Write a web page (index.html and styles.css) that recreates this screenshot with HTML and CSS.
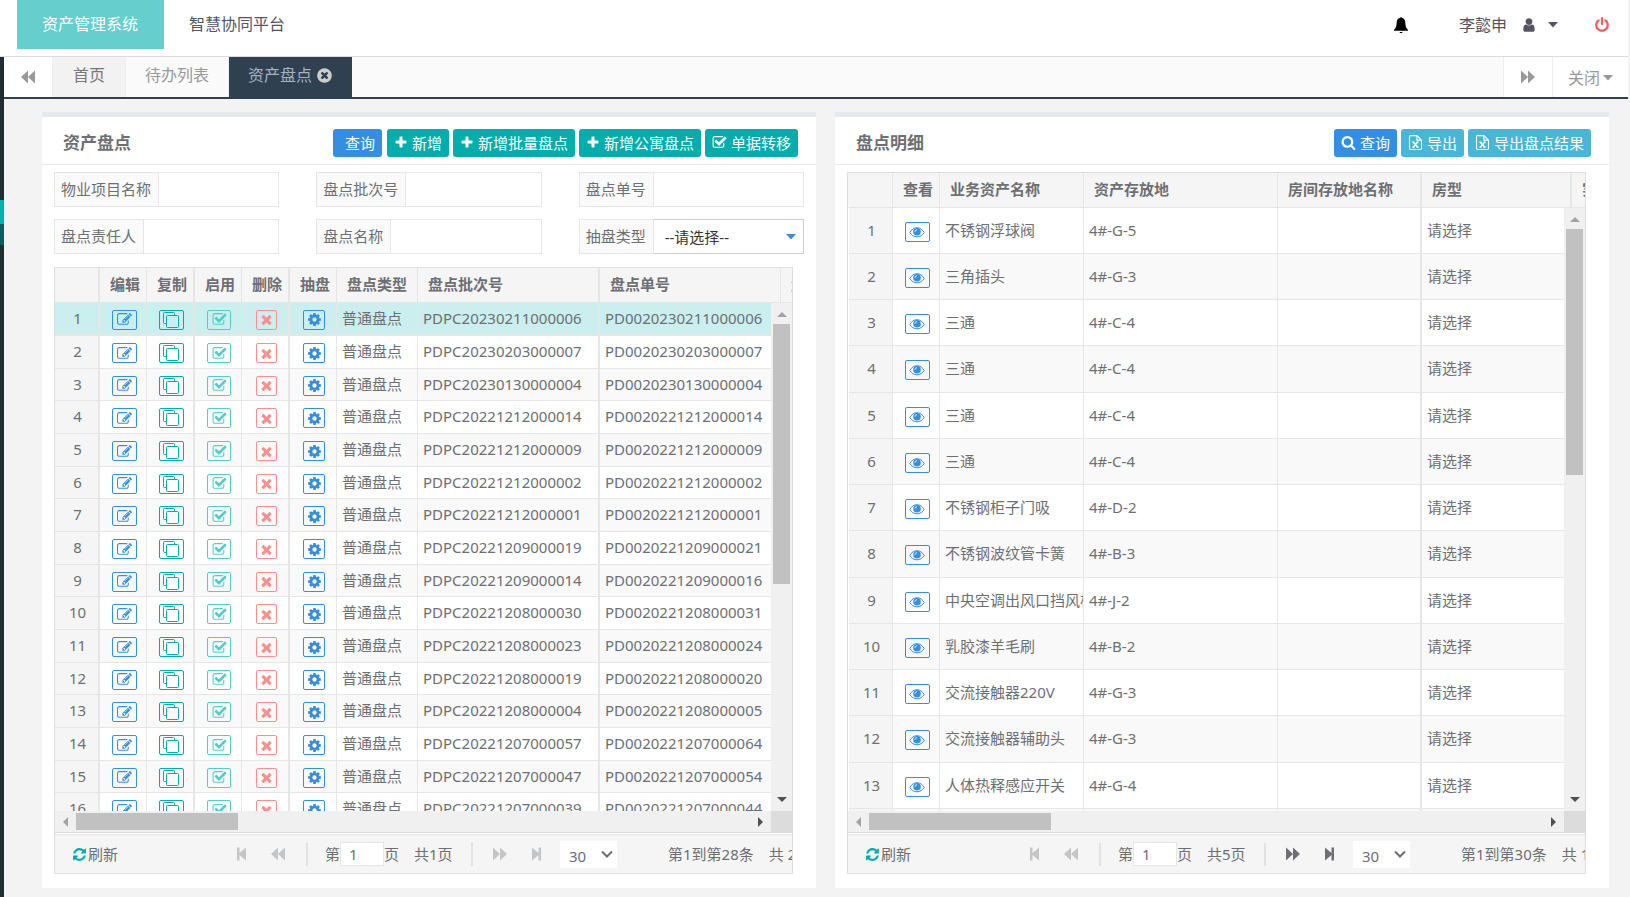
FILE: index.html
```html
<!DOCTYPE html>
<html lang="zh-CN">
<head>
<meta charset="utf-8">
<title>资产管理系统</title>
<link rel="stylesheet" href="styles.css">
</head>
<body>
<svg class="sprite" aria-hidden="true">
  <symbol id="i-edit" viewBox="0 0 1792 1792"><path d="M888 1184l116-116-152-152-116 116v56h96v96h56zm440-720q-16-16-33 1l-350 350q-17 17-1 33t33-1l350-350q17-17 1-33zm80 594v190q0 119-84.500 203.500t-203.500 84.500h-832q-119 0-203.500-84.500t-84.500-203.500v-832q0-119 84.500-203.500t203.500-84.500h832q63 0 117 25 15 7 18 23 3 17-9 29l-49 49q-14 14-32 8-23-6-45-6h-832q-66 0-113 47t-47 113v832q0 66 47 113t113 47h832q66 0 113-47t47-113v-126q0-13 9-22l64-64q15-15 35-7t20 29zm-96-738l288 288-672 672h-288v-288zm444 132l-92 92-288-288 92-92q28-28 68-28t68 28l152 152q28 28 28 68t-28 68z"/></symbol>
  <symbol id="i-clone" viewBox="0 0 16 16"><path fill="none" stroke="currentColor" stroke-width="1" d="M3.500 11.500h-2a1 1 0 0 1-1-1v-9a1 1 0 0 1 1-1h9a1 1 0 0 1 1 1v2M4.500 3.500h10a1 1 0 0 1 1 1v10a1 1 0 0 1-1 1h-10a1 1 0 0 1-1-1v-10a1 1 0 0 1 1-1z"/></symbol>
  <symbol id="i-check" viewBox="0 0 1792 1792"><path d="M1472 930v318q0 119-84.500 203.500t-203.500 84.500h-832q-119 0-203.500-84.500t-84.500-203.500v-832q0-119 84.500-203.500t203.500-84.500h832q63 0 117 25 15 7 18 23 3 17-9 29l-49 49q-10 10-23 10-3 0-9-2-23-6-45-6h-832q-66 0-113 47t-47 113v832q0 66 47 113t113 47h832q66 0 113-47t47-113v-254q0-13 9-22l64-64q10-10 23-10 6 0 12 3 20 8 20 29zm231-489l-814 814q-24 24-57 24t-57-24l-430-430q-24-24-24-57t24-57l110-110q24-24 57-24t57 24l263 263 647-647q24-24 57-24t57 24l110 110q24 24 24 57t-24 57z"/></symbol>
  <symbol id="i-times" viewBox="0 0 1792 1792"><path d="M1490 1322q0 40-28 68l-136 136q-28 28-68 28t-68-28l-294-294-294 294q-28 28-68 28t-68-28l-136-136q-28-28-28-68t28-68l294-294-294-294q-28-28-28-68t28-68l136-136q28-28 68-28t68 28l294 294 294-294q28-28 68-28t68 28l136 136q28 28 28 68t-28 68l-294 294 294 294q28 28 28 68z"/></symbol>
  <symbol id="i-cog" viewBox="0 0 1792 1792"><path d="M1152 896q0-106-75-181t-181-75-181 75-75 181 75 181 181 75 181-75 75-181zm512-109v222q0 12-8 23t-20 13l-185 28q-19 54-39 91 35 50 107 138 10 12 10 25t-9 23q-27 37-99 108t-94 71q-12 0-26-9l-138-108q-44 23-91 38-16 136-29 186-7 28-36 28h-222q-14 0-24.500-8.500t-11.500-21.500l-28-184q-49-16-90-37l-141 107q-10 9-25 9-14 0-25-11-126-114-165-168-7-10-7-23 0-12 8-23 15-21 51-66.500t54-70.500q-27-50-41-99l-183-27q-13-2-21-12.500t-8-23.500v-222q0-12 8-23t19-13l186-28q14-46 39-92-40-57-107-138-10-12-10-24 0-10 9-23 26-36 98.500-107.500t94.500-71.500q13 0 26 10l138 107q44-23 91-38 16-136 29-186 7-28 36-28h222q14 0 24.500 8.500t11.500 21.500l28 184q49 16 90 37l142-107q9-9 24-9 13 0 25 10 129 119 165 170 7 8 7 22 0 12-8 23-15 21-51 66.500t-54 70.500q26 50 41 98l183 28q13 2 21 12.500t8 23.500z"/></symbol>
  <symbol id="i-plus" viewBox="0 0 1792 1792"><path d="M1600 736v192q0 40-28 68t-68 28h-416v416q0 40-28 68t-68 28h-192q-40 0-68-28t-28-68v-416h-416q-40 0-68-28t-28-68v-192q0-40 28-68t68-28h416v-416q0-40 28-68t68-28h192q40 0 68 28t28 68v416h416q40 0 68 28t28 68z"/></symbol>
  <symbol id="i-search" viewBox="0 0 1792 1792"><path d="M1216 832q0-185-131.500-316.500t-316.500-131.500-316.500 131.500-131.500 316.500 131.500 316.500 316.500 131.500 316.500-131.500 131.500-316.500zm512 832q0 52-38 90t-90 38q-54 0-90-38l-343-342q-179 124-399 124-143 0-273.500-55.500t-225-150-150-225-55.500-273.500 55.500-273.500 150-225 225-150 273.500-55.500 273.500 55.500 225 150 150 225 55.500 273.500q0 220-124 399l343 343q37 37 37 90z"/></symbol>
  <symbol id="i-refresh" viewBox="0 0 1792 1792"><path d="M1639 1056q0 5-1 7-64 268-268 434.500t-478 166.500q-146 0-282.500-55t-243.500-157l-129 129q-19 19-45 19t-45-19-19-45v-448q0-26 19-45t45-19h448q26 0 45 19t19 45-19 45l-137 137q71 66 161 102t187 36q134 0 250-65t186-179q11-17 53-117 8-23 30-23h192q13 0 22.500 9.500t9.500 22.500zm25-800v448q0 26-19 45t-45 19h-448q-26 0-45-19t-19-45 19-45l138-138q-148-137-349-137-134 0-250 65t-186 179q-11 17-53 117-8 23-30 23h-199q-13 0-22.500-9.500t-9.500-22.500v-7q65-268 270-434.500t480-166.500q146 0 284 55.500t245 156.500l130-129q19-19 45-19t45 19 19 45z"/></symbol>
  <symbol id="i-power" viewBox="0 0 1792 1792"><path d="M1664 896q0 156-61 298t-164 245-245 164-298 61-298-61-245-164-164-245-61-298q0-182 80.500-343t226.500-270q43-32 95.500-25t83.500 50q32 42 24.500 94.500t-49.500 84.500q-98 74-151.500 181t-53.500 228q0 104 40.500 198.500t109.500 163.500 163.500 109.500 198.500 40.500 198.500-40.500 163.500-109.500 109.500-163.500 40.500-198.500q0-121-53.500-228t-151.500-181q-42-32-49.500-84.500t24.500-94.500q31-43 84-50t95 25q146 109 226.500 270t80.500 343zm-640-768v640q0 52-38 90t-90 38-90-38-38-90v-640q0-52 38-90t90-38 90 38 38 90z"/></symbol>
  <symbol id="i-user" viewBox="0 0 1792 1792"><path d="M1536 1399q0 109-62.500 187t-150.500 78h-854q-88 0-150.500-78t-62.500-187q0-85 8.500-160.500t31.500-152 58.500-131 94-89 134.500-34.500q131 128 313 128t313-128q76 0 134.500 34.500t94 89 58.500 131 31.500 152 8.500 160.500zm-256-887q0 159-112.500 271.500t-271.500 112.500-271.500-112.500-112.500-271.500 112.500-271.500 271.500-112.500 271.500 112.500 112.500 271.500z"/></symbol>
  <symbol id="i-close" viewBox="0 0 1792 1792"><path d="M1277 1122q0-26-19-45l-181-181 181-181q19-19 19-45 0-27-19-46l-90-90q-19-19-46-19-26 0-45 19l-181 181-181-181q-19-19-45-19-27 0-46 19l-90 90q-19 19-19 46 0 26 19 45l181 181-181 181q-19 19-19 45 0 27 19 46l90 90q19 19 46 19 26 0 45-19l181-181 181 181q19 19 45 19 27 0 46-19l90-90q19-19 19-46zm387-226q0 209-103 385.500t-279.500 279.500-385.500 103-385.500-103-279.500-279.500-103-385.500 103-385.500 279.500-279.500 385.500-103 385.500 103 279.500 279.500 103 385.500z"/></symbol>
  <symbol id="i-bell" viewBox="0 0 16 16"><path d="M7.500 0h1v.8C11 1.200 12.200 3 12.300 5.500c.1 3.500.7 5 2.700 7.500v.8H1V13c2-2.500 2.600-4 2.700-7.500C3.800 3 5 1.200 7.500.8zM6.500 15h3l-.5 1H7z"/></symbol>
  <symbol id="i-back" viewBox="0 0 16 16"><path d="M8 1.500v13L1 8zM15 1.500v13L8 8z"/></symbol>
  <symbol id="i-fwd" viewBox="0 0 16 16"><path d="M1 1.500v13L8 8zM8 1.500v13L15 8z"/></symbol>
  <symbol id="i-first" viewBox="0 0 16 16"><path d="M3 1.500h2.500V7L12 1.500v13L5.500 9v5.500H3z"/></symbol>
  <symbol id="i-last" viewBox="0 0 16 16"><path d="M13 1.500h-2.500V7L4 1.500v13L10.500 9v5.500H13z"/></symbol>
  <symbol id="i-caret" viewBox="0 0 10 6"><path d="M0 0h10L5 5.500z"/></symbol>
  <symbol id="i-chevron" viewBox="0 0 12 8"><path d="M1 1.500l5 5 5-5" fill="none" stroke="currentColor" stroke-width="2"/></symbol>
  <symbol id="i-eye" viewBox="0 0 16 16"><path fill="none" stroke="currentColor" d="M.8 8.500C2.500 5.500 5 3.700 8 3.700s5.500 1.800 7.200 4.800C13.500 11.300 11 12.800 8 12.800S2.500 11.300.8 8.500z"/><circle cx="8" cy="7.800" r="3.800"/><path fill="none" stroke="#fff" stroke-width=".8" d="M5.900 7.800A2.100 2.100 0 0 1 8 5.700"/></symbol>
  <symbol id="i-excel" viewBox="0 0 14 16"><path fill="none" stroke="currentColor" stroke-width="1.200" d="M8.500.6h-7a.9.900 0 0 0-.9.900v13a.9.900 0 0 0 .9.900h11a.9.900 0 0 0 .9-.9v-9zV5.500h5"/><path fill="none" stroke="currentColor" stroke-width="1.500" d="M4.500 7.500l5 5.500M9.500 7.500l-5 5.500"/><path fill="none" stroke="currentColor" d="M3.500 7.500h2.500M8 7.500h2.500M3.500 13h2.500M8 13h2.500"/></symbol>
</svg>

<header class="topbar">
  <nav class="topnav">
    <a class="topnav-link is-active" href="#">资产管理系统</a>
    <a class="topnav-link" href="#">智慧协同平台</a>
  </nav>
  <div class="topbar-tools">
    <button class="tool bell" aria-label="通知"><svg class="icon"><use href="#i-bell"/></svg></button>
    <button class="tool user">李懿申<svg class="icon"><use href="#i-user"/></svg><svg class="caret"><use href="#i-caret"/></svg></button>
    <button class="tool power" aria-label="退出"><svg class="icon"><use href="#i-power"/></svg></button>
  </div>
</header>

<div class="shell">
  <aside class="side"><span class="side-on"></span><span class="side-sub"></span></aside>
  <main class="main">
    <nav class="tabs">
      <button class="tab-btn" aria-label="向左"><svg class="icon"><use href="#i-back"/></svg></button>
      <a class="tab is-home" href="#">首页</a>
      <a class="tab" href="#">待办列表</a>
      <a class="tab is-active" href="#">资产盘点<svg class="icon"><use href="#i-close"/></svg></a>
      <span class="tab-space"></span>
      <button class="tab-btn is-right" aria-label="向右"><svg class="icon"><use href="#i-fwd"/></svg></button>
      <button class="tab-btn tab-close">关闭<svg class="caret"><use href="#i-caret"/></svg></button>
    </nav>

    <div class="panels">
      <section class="panel">
        <header class="panel-head">
          <h2 class="panel-title">资产盘点</h2>
          <div class="actions">
            <button class="btn blue no-icon">查询</button>
            <button class="btn"><svg class="icon plus"><use href="#i-plus"/></svg>新增</button>
            <button class="btn"><svg class="icon plus"><use href="#i-plus"/></svg>新增批量盘点</button>
            <button class="btn"><svg class="icon plus"><use href="#i-plus"/></svg>新增公寓盘点</button>
            <button class="btn"><svg class="icon"><use href="#i-check"/></svg>单据转移</button>
          </div>
        </header>
        <div class="panel-body">
          <form class="filters">
            <div class="field"><label for="f1">物业项目名称</label><input id="f1" type="text"></div>
            <div class="field"><label for="f2">盘点批次号</label><input id="f2" type="text"></div>
            <div class="field"><label for="f3">盘点单号</label><input id="f3" type="text"></div>
            <div class="field"><label for="f4">盘点责任人</label><input id="f4" type="text"></div>
            <div class="field"><label for="f5">盘点名称</label><input id="f5" type="text"></div>
            <div class="field"><label for="f6">抽盘类型</label><span class="select-box"><select id="f6"><option>--请选择--</option></select><svg class="caret"><use href="#i-caret"/></svg></span></div>
          </form>
          <div class="grid">
            <div class="grid-head">
              <table class="table orders">
                <colgroup><col class="c-num"><col class="c-odd"><col class="c-even"><col class="c-odd"><col class="c-even"><col class="c-odd"><col class="c-type"><col class="c-batch"><col class="c-order"><col class="c-rest"></colgroup>
                <thead><tr><th class="thick"></th><th>编辑</th><th class="thick">复制</th><th>启用</th><th class="thick">删除</th><th>抽盘</th><th>盘点类型</th><th class="thick">盘点批次号</th><th>盘点单号</th><th>盘点名称</th></tr></thead>
              </table>
            </div>
            <div class="grid-mid">
              <div class="grid-view">
                <table class="table orders">
                  <colgroup><col class="c-num"><col class="c-odd"><col class="c-even"><col class="c-odd"><col class="c-even"><col class="c-odd"><col class="c-type"><col class="c-batch"><col class="c-order"><col class="c-rest"></colgroup>
                  <tbody id="orders"></tbody>
                </table>
              </div>
              <div class="vbar"><i class="arrow up"></i><span class="thumb thumb-orders"></span><i class="arrow down"></i></div>
            </div>
            <div class="hbar"><i class="arrow left"></i><span class="track"><span class="thumb hthumb-orders"></span></span><i class="arrow right"></i><span class="corner"></span></div>
            <footer class="pager">
              <button class="refresh"><svg class="icon"><use href="#i-refresh"/></svg>刷新</button>
              <button class="pg off" aria-label="第一页"><svg class="icon"><use href="#i-first"/></svg></button>
              <button class="pg off" aria-label="上一页"><svg class="icon"><use href="#i-back"/></svg></button>
              <span class="sep"></span>
              <label class="page-no">第<input type="text" value="1">页</label>
              <span class="total">共1页</span>
              <span class="sep"></span>
              <button class="pg off" aria-label="下一页"><svg class="icon"><use href="#i-fwd"/></svg></button>
              <button class="pg pg-end off" aria-label="最后一页"><svg class="icon"><use href="#i-last"/></svg></button>
              <span class="size"><select aria-label="每页条数"><option>30</option></select><svg class="chevron"><use href="#i-chevron"/></svg></span>
              <span class="range">第1到第28条</span>
              <span class="sum">共 28 条</span>
            </footer>
          </div>
        </div>
      </section>

      <section class="panel">
        <header class="panel-head">
          <h2 class="panel-title">盘点明细</h2>
          <div class="actions">
            <button class="btn blue"><svg class="icon"><use href="#i-search"/></svg>查询</button>
            <button class="btn sky"><svg class="icon"><use href="#i-excel"/></svg>导出</button>
            <button class="btn sky"><svg class="icon"><use href="#i-excel"/></svg>导出盘点结果</button>
          </div>
        </header>
        <div class="panel-body">
          <div class="grid">
            <div class="grid-head">
              <table class="table details">
                <colgroup><col class="c-index"><col class="c-odd"><col class="c-name"><col class="c-place"><col class="c-room"><col class="c-kind"><col class="c-rest"></colgroup>
                <thead><tr><th></th><th>查看</th><th>业务资产名称</th><th>资产存放地</th><th class="thick">房间存放地名称</th><th class="thick">房型</th><th>实盘数量</th></tr></thead>
              </table>
            </div>
            <div class="grid-mid">
              <div class="grid-view">
                <table class="table details">
                  <colgroup><col class="c-index"><col class="c-odd"><col class="c-name"><col class="c-place"><col class="c-room"><col class="c-kind"><col class="c-rest"></colgroup>
                  <tbody id="details"></tbody>
                </table>
              </div>
              <div class="vbar"><i class="arrow up"></i><span class="thumb thumb-details"></span><i class="arrow down"></i></div>
            </div>
            <div class="hbar"><i class="arrow left"></i><span class="track"><span class="thumb hthumb-details"></span></span><i class="arrow right"></i><span class="corner"></span></div>
            <footer class="pager">
              <button class="refresh"><svg class="icon"><use href="#i-refresh"/></svg>刷新</button>
              <button class="pg off" aria-label="第一页"><svg class="icon"><use href="#i-first"/></svg></button>
              <button class="pg off" aria-label="上一页"><svg class="icon"><use href="#i-back"/></svg></button>
              <span class="sep"></span>
              <label class="page-no">第<input type="text" value="1">页</label>
              <span class="total">共5页</span>
              <span class="sep"></span>
              <button class="pg" aria-label="下一页"><svg class="icon"><use href="#i-fwd"/></svg></button>
              <button class="pg pg-end" aria-label="最后一页"><svg class="icon"><use href="#i-last"/></svg></button>
              <span class="size"><select aria-label="每页条数"><option>30</option></select><svg class="chevron"><use href="#i-chevron"/></svg></span>
              <span class="range">第1到第30条</span>
              <span class="sum">共 150 条</span>
            </footer>
          </div>
        </div>
      </section>
    </div>
  </main>
</div>
<script src="app.js"></script>
</body>
</html>
```

FILE: styles.css
```css
* { box-sizing: border-box; }

body {
  margin: 0;
  height: 100vh;
  display: flex;
  flex-direction: column;
  overflow: hidden;
  background: #f3f3f4;
  color: #6d6f73;
  font: 15px/20px "Noto Sans", "Noto Sans CJK SC", sans-serif;
}

button, input, select { font: inherit; color: inherit; margin: 0; padding: 0; border: 0; background: none; border-radius: 0; }
button { cursor: pointer; white-space: nowrap; }
select { appearance: none; }
a { color: inherit; text-decoration: none; }

.sprite { position: absolute; width: 0; height: 0; }
.icon { width: 15px; height: 15px; fill: currentColor; flex: none; }
.caret { width: 10px; height: 6px; fill: currentColor; flex: none; }

/* top bar */
.topbar {
  flex: none;
  display: flex;
  justify-content: space-between;
  height: 57px;
  margin-right: 2px;
  padding-left: 17px;
  background: #fff;
  border-bottom: 1px solid #dcdcdc;
  color: #565464;
  font-size: 16px;
}
.topnav { display: flex; }
.topnav-link { height: 49px; padding: 0 26px 0 25px; line-height: 49px; }
.topnav-link.is-active { background: #66cecc; color: #fff; }
.topbar-tools { display: flex; align-items: center; height: 50px; padding-right: 18px; }
.tool { display: flex; align-items: center; }
.tool .icon { width: 16px; height: 16px; }
.bell { margin-right: 50px; color: #000; }
.user { margin-right: 36px; }
.user .icon { margin: 0 11px 0 14px; }
.power { color: #fd5b54; }

/* shell */
.shell { flex: 1; min-height: 0; display: flex; }
.side { width: 4px; flex: none; background: #222d32; padding-top: 143px; display: flex; flex-direction: column; }
.side-on { height: 24px; background: #00afae; }
.side-sub { height: 21px; background: #06605f; }
.main { flex: 1; min-width: 0; display: flex; flex-direction: column; }

/* tabs */
.tabs {
  flex: none;
  display: flex;
  height: 42px;
  margin-right: 2px;
  background: #fafafa;
  border-bottom: 2px solid #2f4050;
  color: #999;
  font-size: 16px;
}
.tab { display: flex; align-items: center; gap: 4px; padding: 0 19px 4px; border-right: 1px solid #eee; }
.tab.is-home { padding: 0 20px 4px; background: #f2f2f2; color: #777; }
.tab.is-active { background: #2f4050; color: #a7b1c2; border: 0; }
.tab.is-active .icon { width: 17px; height: 17px; color: #ccc; }
.tab-space { flex: 1; }
.tab-btn { display: flex; align-items: center; justify-content: center; width: 49px; background: #fff; color: #999; border-right: 1px solid #eee; }
.tab-btn .icon { width: 16px; height: 16px; }
.tab-btn.is-right { width: 50px; border-left: 1px solid #eee; }
.tab-btn.tab-close { width: 75px; gap: 3px; padding-top: 2px; border: 0; }

/* panels */
.panels { flex: 1; min-height: 0; display: grid; grid-template-columns: 1fr 1fr; gap: 19px; padding: 13px 21px 9px 38px; }
.panel { min-width: 0; min-height: 0; display: flex; flex-direction: column; background: #fff; border-top: 5px solid #e7eaec; }
.panel-head { flex: none; display: flex; justify-content: space-between; align-items: center; height: 48px; padding: 4px 18px 0 21px; border-bottom: 1px solid #e7eaec; }
.panel-title { margin: 0; font-size: 17px; font-weight: 700; }
.actions { display: flex; gap: 4px; }
.btn { display: flex; align-items: center; gap: 4px; height: 28px; padding: 0 7px; border-radius: 3px; background: #03adac; color: #fff; }
.btn .plus { width: 14px; }
.btn.blue { background: #348fe2; }
.btn.blue.no-icon { padding-left: 12px; margin-right: 1px; }
.btn.sky { background: #49b6d6; }
.panel-body { flex: 1; min-height: 0; display: flex; flex-direction: column; gap: 13px; padding: 7px 12px 14px; }

/* filters */
.filters { flex: none; display: grid; grid-template-columns: repeat(3, minmax(0, 1fr)); gap: 12px 37px; }
.field { display: flex; height: 35px; border: 1px solid #e5e6e7; }
.field label { flex: none; padding: 0 7px 0 6px; line-height: 33px; background: #fafafa; border-right: 1px solid #e5e6e7; }
.field input { flex: 1; min-width: 0; padding: 0 8px; background: #fff; }
.select-box { flex: 1; min-width: 0; display: flex; align-items: center; margin: -1px -1px -1px 0; padding-right: 7px; border: 1px solid #ccc; border-left: 0; color: #333; }
.select-box select { flex: 1; min-width: 0; padding-left: 11px; }
.select-box .caret { color: #348fe2; }

/* data grid */
.grid { flex: 1; min-height: 0; display: flex; flex-direction: column; margin-right: 11px; border: 1px solid #ddd; overflow: hidden; }
.grid-head { flex: none; overflow: hidden; background: #f5f5f6; }
.grid-mid { flex: 1; min-height: 0; display: flex; }
.grid-view { flex: 1; min-width: 0; overflow: hidden; }
.table { table-layout: fixed; border-collapse: separate; border-spacing: 0; }
.orders { width: 846px; }
.details { width: 843px; margin-left: 1px; }
.c-num { width: 45px; }
.c-index { width: 44px; }
.c-odd { width: 47px; }
.c-even { width: 48px; }
.c-type { width: 81px; }
.c-batch { width: 182px; }
.c-order { width: 181px; }
.c-rest { width: 120px; }
.c-name { width: 144px; }
.c-place { width: 194px; }
.c-room { width: 144px; }
.c-kind { width: 150px; }

.table th { height: 35px; padding: 0 0 2px 10px; text-align: left; font-weight: 700; white-space: nowrap; overflow: hidden; border-right: 1px solid #e6e6e6; border-bottom: 1px solid #e6e6e6; }
.table td { height: 33px; padding: 0 0 2px 5px; white-space: nowrap; overflow: hidden; border-right: 1px solid #e6e6e6; border-bottom: 1px solid #e6e6e6; line-height: 20px; }
.orders tr:nth-child(3n) td { height: 32px; }
.details td { height: 46px; }
.details tr:nth-child(4n) td { height: 47px; }
.table .thick { border-right-width: 2px; }
.details tbody tr:nth-child(even), .orders tbody tr:nth-child(odd) { background: #f9f9f9; }
.table td.num { padding: 0 0 2px 2px; text-align: center; background: #f5f5f6; }
.table td.act { padding: 0 0 0 2px; text-align: center; }
.orders tbody tr.is-selected, .orders tbody tr.is-selected td.num { background: #cbeeee; }
.orders tbody tr.is-selected td { border-bottom-width: 2px; }

.mini { display: inline-flex; align-items: center; justify-content: center; width: 25px; height: 20px; margin-top: 2px; vertical-align: middle; border: 1px solid currentColor; border-radius: 2px; color: #348fe2; }
.mini.clone { color: #00acac; }
.mini.check { width: 24px; color: #5cc; }
.mini.times { width: 21px; color: #ff8f8c; }
.mini.cog { width: 22px; }
.mini.clone .icon, .mini.eye .icon { width: 16px; height: 16px; }

/* scrollbars */
.vbar { flex: none; width: 21px; display: flex; flex-direction: column; align-items: center; background: #f0f0f0; padding: 9px 0; }
.vbar .thumb { width: 17px; margin: 7px 0 auto; background: #c1c1c1; }
.thumb-orders { height: 53%; }
.thumb-details { height: 42%; }
.hbar { flex: none; height: 22px; display: flex; align-items: center; background: #f0f0f0; border-bottom: 1px solid #d8d8d8; padding-left: 8px; }
.track { flex: 1; margin: 0 9px 0 8px; }
.hbar .thumb { display: block; height: 17px; background: #c1c1c1; }
.hthumb-orders { width: 24%; }
.hthumb-details { width: 27%; }
.corner { width: 21px; height: 21px; margin-left: 8px; background: #dcdcdc; }
.arrow { width: 0; height: 0; border: 5px solid transparent; flex: none; }
.arrow.up { border-top: 0; border-bottom-color: #a3a3a3; }
.arrow.down { border-bottom: 0; border-top-color: #505050; }
.arrow.left { border-left: 0; border-right-color: #a3a3a3; }
.arrow.right { border-right: 0; border-left-color: #505050; }

/* pager */
.pager { flex: none; display: flex; align-items: center; height: 39px; margin-top: 1px; padding-left: 17px; background: #f5f5f6; border-top: 1px solid #e2e5e8; white-space: nowrap; }
.pager > * { flex: none; }
.refresh { display: flex; align-items: center; gap: 1px; width: 162px; }
.refresh .icon { color: #00acac; }
.pg { display: flex; margin-right: 20px; }
.pg-end { margin-right: 16px; }
.pg .icon { width: 16px; height: 16px; }
.pg.off { color: #c4c5c7; }
.sep { width: 2px; height: 23px; background: #e2e2e3; }
.page-no { display: flex; align-items: center; margin-left: 17px; }
.page-no input { width: 44px; height: 24px; padding-left: 8px; background: #fff; border: 1px solid #e5e6e7; }
.total { width: 57px; margin-left: 15px; }
.total + .sep { margin-right: 19px; }
.size { display: flex; align-items: center; width: 57px; height: 27px; padding: 0 4px 0 9px; background: #fff; }
.size select { flex: 1; min-width: 0; padding-top: 3px; }
.chevron { width: 12px; height: 8px; }
.range { margin-left: 51px; }
.sum { margin-left: 15px; }
```

FILE: app.js
```js
const orders = [
  ["20230211000006", "20230211000006"],
  ["20230203000007", "20230203000007"],
  ["20230130000004", "20230130000004"],
  ["20221212000014", "20221212000014"],
  ["20221212000009", "20221212000009"],
  ["20221212000002", "20221212000002"],
  ["20221212000001", "20221212000001"],
  ["20221209000019", "20221209000021"],
  ["20221209000014", "20221209000016"],
  ["20221208000030", "20221208000031"],
  ["20221208000023", "20221208000024"],
  ["20221208000019", "20221208000020"],
  ["20221208000004", "20221208000005"],
  ["20221207000057", "20221207000064"],
  ["20221207000047", "20221207000054"],
  ["20221207000039", "20221207000044"]
];

const details = [
  ["不锈钢浮球阀", "4#-G-5"],
  ["三角插头", "4#-G-3"],
  ["三通", "4#-C-4"],
  ["三通", "4#-C-4"],
  ["三通", "4#-C-4"],
  ["三通", "4#-C-4"],
  ["不锈钢柜子门吸", "4#-D-2"],
  ["不锈钢波纹管卡簧", "4#-B-3"],
  ["中央空调出风口挡风板", "4#-J-2"],
  ["乳胶漆羊毛刷", "4#-B-2"],
  ["交流接触器220V", "4#-G-3"],
  ["交流接触器辅助头", "4#-G-3"],
  ["人体热释感应开关", "4#-G-4"],
  ["", ""]
];

const action = (name, label, thick) =>
  `<td class="act${thick ? " thick" : ""}"><button class="mini ${name}" aria-label="${label}"><svg class="icon"><use href="#i-${name}"/></svg></button></td>`;

document.getElementById("orders").innerHTML = orders.map(([batch, order], i) => `
  <tr class="${i === 0 ? "is-selected" : ""}">
    <td class="num thick">${i + 1}</td>
    ${action("edit", "编辑")}${action("clone", "复制", true)}${action("check", "启用")}${action("times", "删除", true)}${action("cog", "抽盘")}
    <td>普通盘点</td><td class="thick">PDPC${batch}</td><td>PD00${order}</td><td></td>
  </tr>`).join("");

document.getElementById("details").innerHTML = details.map(([name, place], i) => name ? `
  <tr>
    <td class="num">${i + 1}</td>${action("eye", "查看")}
    <td>${name}</td><td>${place}</td><td class="thick"></td><td class="thick">请选择</td><td></td>
  </tr>` : `<tr><td class="num"></td><td></td><td></td><td></td><td class="thick"></td><td class="thick"></td><td></td></tr>`).join("");
```
